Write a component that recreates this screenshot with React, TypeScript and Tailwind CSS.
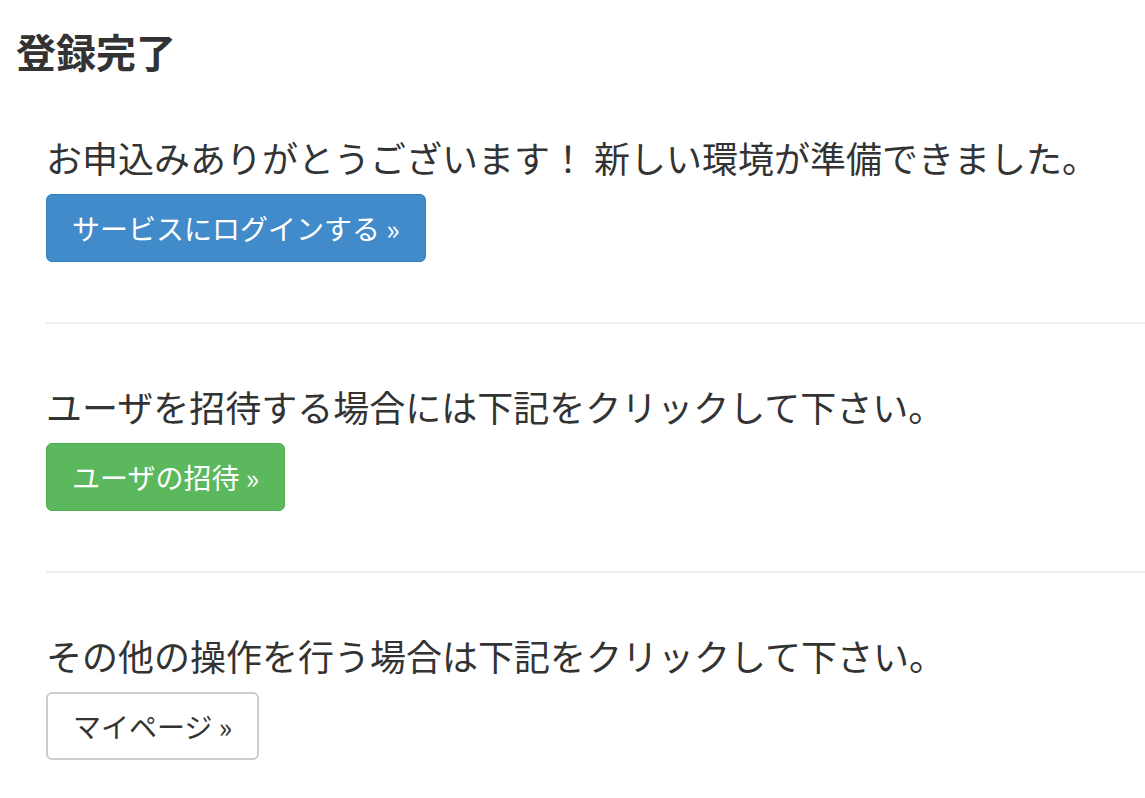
const font = { fontFamily: '"Noto Sans CJK JP", "Noto Sans", sans-serif' };

function Section({ text, button }: { text: string; button: React.ReactNode }) {
  return (
    <div>
      <p className="text-[36px] leading-[50px] text-[#333]">{text}</p>
      <div className="mt-[12px]">{button}</div>
    </div>
  );
}

export default function App() {
  return (
    <div className="min-h-screen bg-white text-[#333]" style={font}>
      <h1 className="pl-[16px] pt-[24px] text-[40px] leading-[54px] font-bold text-[#333]">登録完了</h1>
      <div className="pl-[46px] pt-[54px]">
        <Section
          text="お申込みありがとうございます！ 新しい環境が準備できました。"
          button={
            <button className="h-[68px] px-[25px] text-[28px] text-white bg-[#428bca] border border-[#357ebd] rounded-[6px]">
              サービスにログインする »
            </button>
          }
        />
        <hr className="mt-[60px] mb-[57px] border-0 h-[2px] bg-[#eee]" />
        <Section
          text="ユーザを招待する場合には下記をクリックして下さい。"
          button={
            <button className="h-[68px] px-[25px] text-[28px] text-white bg-[#5cb85c] border border-[#4cae4c] rounded-[6px]">
              ユーザの招待 »
            </button>
          }
        />
        <hr className="mt-[60px] mb-[57px] border-0 h-[2px] bg-[#eee]" />
        <Section
          text="その他の操作を行う場合は下記をクリックして下さい。"
          button={
            <button className="h-[68px] px-[25px] text-[28px] text-[#333] bg-white border-2 border-[#ccc] rounded-[6px]">
              マイページ »
            </button>
          }
        />
      </div>
    </div>
  );
}
